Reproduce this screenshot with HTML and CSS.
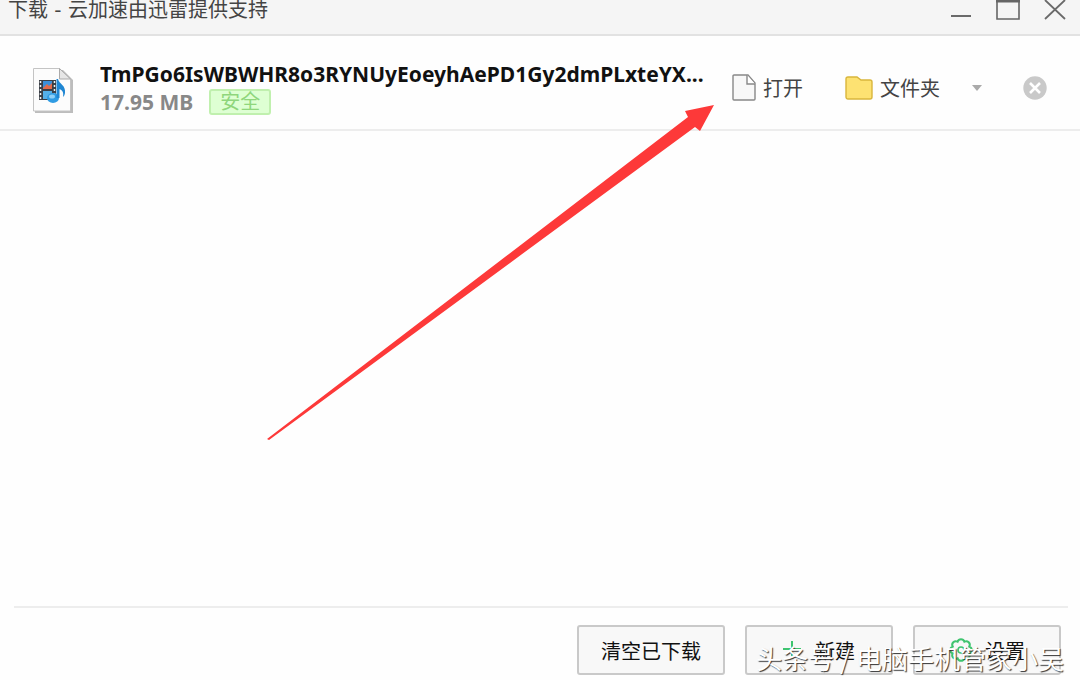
FILE: index.html
```html
<!DOCTYPE html>
<html lang="zh-CN">
<head>
    <meta charset="UTF-8">
    <meta name="viewport" content="width=device-width, initial-scale=1.0">
    <title>下载</title>
    <link rel="stylesheet" href="styles.css">
</head>
<body>
    <header class="title-bar">
        <h1>下载 - 云加速由迅雷提供支持</h1>
        <div class="window-controls">
            <button type="button" aria-label="最小化">
                <svg width="22" height="22" viewBox="0 0 22 22"><path d="M1 16h20" stroke="#6a6a6a" stroke-width="2"/></svg>
            </button>
            <button type="button" aria-label="最大化">
                <svg width="24" height="22" viewBox="0 0 24 22"><path d="M1 1v18h22V1" fill="none" stroke="#666" stroke-width="1.6"/><path d="M0 1h24" stroke="#666" stroke-width="3"/></svg>
            </button>
            <button type="button" aria-label="关闭">
                <svg width="22" height="22" viewBox="0 0 22 22"><path d="M1 0l20 19M21 0L1 19" stroke="#6a6a6a" stroke-width="1.8"/></svg>
            </button>
        </div>
    </header>

    <main>
        <div class="download-item">
            <svg class="file-icon" width="42" height="56" viewBox="0 -6 42 56">
                <path d="M3 4h28l10 10v33H3z" fill="#bdbdbd"/>
                <path d="M1.500 2.500h26l11 11v31.500h-37z" fill="#fcfcfc" stroke="#c4c4c4"/>
                <path d="M27.500 2.500v10.500h11z" fill="#e6e6e6" stroke="#aaa"/>
                <path d="M7 14h17v20H7z" fill="#3a3f46"/>
                <path d="M11 15h9v8h-9z" fill="#3b8fd8"/>
                <path d="M11 22l4-4 2 2 3-3v6h-9z" fill="#e26a4a"/>
                <path d="M11 25h9v8h-9z" fill="#55b0e8"/>
                <path d="M8.500 15v19M22.500 15v19" stroke="#f2f2f2" stroke-width="1.500" stroke-dasharray="2 2"/>
                <ellipse cx="21" cy="32" rx="6" ry="5" fill="#2f9be3"/>
                <path d="M24.500 32V13h1.500c1 5 8 6 7 14-.3 2-1 3-2 4 1-5-1-7-3.500-8v9z" fill="#1f86d2"/>
                <ellipse cx="20" cy="30.500" rx="3" ry="2" fill="#8fd0f7"/>
            </svg>
            <div class="file-info">
                <p class="file-name">TmPGo6IsWBWHR8o3RYNUyEoeyhAePD1Gy2dmPLxteYX...</p>
                <p class="file-meta"><span>17.95 MB</span><span class="safe-tag">安全</span></p>
            </div>
            <div class="item-actions">
                <button type="button" class="open-btn">
                    <svg width="24" height="28" viewBox="0 0 24 28"><path d="M2 1h14l7 8v16a1 1 0 0 1-1 1H2a1 1 0 0 1-1-1V2a1 1 0 0 1 1-1z" fill="#f8f8f8" stroke="#888" stroke-width="1.400"/><path d="M15 1v9h8" fill="#fff" stroke="#888" stroke-width="1.400"/></svg>
                    打开
                </button>
                <button type="button" class="folder-btn">
                    <svg width="28" height="28" viewBox="0 0 28 28"><path d="M3 3h9l4 3h9a2 2 0 0 1 2 2v15a2 2 0 0 1-2 2H3a2 2 0 0 1-2-2V5a2 2 0 0 1 2-2z" fill="#fde272" stroke="#d9b63c" stroke-width="1.400"/></svg>
                    文件夹
                </button>
                <button type="button" class="more-btn" aria-label="更多">
                    <svg width="10" height="8" viewBox="0 0 10 8"><path d="M0 1h10L5 7z" fill="#aaa"/></svg>
                </button>
                <button type="button" class="remove-btn" aria-label="删除">
                    <svg width="24" height="24" viewBox="0 0 24 24"><circle cx="12" cy="12" r="11.700" fill="#c9c9c9"/><path d="M7 7l10 10M17 7L7 17" stroke="#fff" stroke-width="2.600"/></svg>
                </button>
            </div>
        </div>
    </main>

    <footer class="bottom-bar">
        <button type="button">清空已下载</button>
        <button type="button">
            <svg width="20" height="24" viewBox="0 0 20 24"><path d="M9 3v16M0 11h18" stroke="#3fc46f" stroke-width="2"/></svg>
            新建
        </button>
        <button type="button">
            <svg width="24" height="26" viewBox="0 0 24 26"><path d="M20.300 9.600A3.600 3.600 0 0 0 15.400 4.700A3.600 3.600 0 0 0 8.600 4.700A3.600 3.600 0 0 0 3.700 9.600A3.600 3.600 0 0 0 3.700 16.400A3.600 3.600 0 0 0 8.600 21.300A3.600 3.600 0 0 0 15.400 21.300A3.600 3.600 0 0 0 20.300 16.400A3.600 3.600 0 0 0 20.300 9.600z" fill="none" stroke="#3fc46f" stroke-width="2"/><circle cx="12" cy="13" r="3" fill="none" stroke="#3fc46f" stroke-width="1.600"/></svg>
            设置
        </button>
    </footer>

    <!-- Pointer to the open button -->
    <svg class="arrow" width="450" height="340" viewBox="0 0 450 340"><path d="M0 334L421 12l-3-6L447 0l-14 26-5-4L2 335z" fill="#fd3939"/></svg>
    <div class="watermark">头条号 / 电脑手机管家小吴</div>
</body>
</html>
```
FILE: styles.css
```css
:root {
    --bar-color: #f5f5f5;
    --line-color: #ededed;
    --text-color: #444;
    --safe-color: #8fd67c;
}

* {
    margin: 0;
    padding: 0;
    box-sizing: border-box;
}

body {
    position: relative;
    display: flex;
    flex-direction: column;
    min-height: 100vh;
    background-color: #fefefe;
    color: var(--text-color);
    font-family: 'DejaVu Sans', 'Noto Sans CJK SC', sans-serif;
    font-size: 20px;
    overflow: hidden;
}

button {
    display: flex;
    align-items: center;
    border: none;
    background: none;
    color: inherit;
    font: inherit;
    white-space: nowrap;
    cursor: pointer;
}

svg {
    display: block;
    flex-shrink: 0;
}

.title-bar {
    display: flex;
    justify-content: space-between;
    align-items: flex-start;
    height: 36px;
    padding: 0 14px 0 8px;
    background-color: var(--bar-color);
    border-bottom: 2px solid #e2e2e2;
}

h1 {
    font-size: 20px;
    font-weight: normal;
    line-height: 20px;
}

.window-controls {
    display: flex;
    gap: 24px;
}

.download-item {
    display: flex;
    align-items: center;
    height: 95px;
    padding: 10px 33px 0 32px;
    border-bottom: 2px solid var(--line-color);
}

.file-info {
    flex: 1;
    min-width: 0;
    margin-left: 26px;
    font-family: 'Noto Sans', 'Noto Sans CJK SC', sans-serif;
    font-size: 21px;
    font-weight: bold;
}

.file-name {
    overflow: hidden;
    color: #111;
    line-height: 28px;
    white-space: nowrap;
}

.file-meta {
    display: flex;
    align-items: center;
    gap: 16px;
    color: #888;
    line-height: 28px;
}

.safe-tag {
    padding: 0 9px;
    border: 2px solid #c0f0ae;
    border-radius: 3px;
    background-color: #deffd3;
    color: var(--safe-color);
    font-size: 20px;
    font-weight: normal;
    line-height: 22px;
}

.item-actions {
    display: flex;
    align-items: center;
    margin-left: 20px;
}

.open-btn,
.folder-btn {
    gap: 7px;
}

.folder-btn {
    margin-left: 42px;
}

.more-btn {
    margin-left: 32px;
}

.remove-btn {
    margin-left: 41px;
}

.bottom-bar {
    display: flex;
    justify-content: flex-end;
    gap: 20px;
    margin: auto 12px 0 14px;
    padding: 17px 7px 5px 0;
    border-top: 2px solid var(--line-color);
}

.bottom-bar button {
    justify-content: center;
    gap: 12px;
    width: 148px;
    height: 50px;
    border: 2px solid #c9c9c9;
    border-radius: 3px;
    background-color: #f8f8f8;
    color: #111;
}

.arrow {
    position: absolute;
    top: 105px;
    left: 267px;
    pointer-events: none;
}

.watermark {
    position: absolute;
    right: 16px;
    bottom: 6px;
    color: #fff;
    font-family: 'Noto Sans CJK SC', sans-serif;
    font-size: 26px;
    line-height: 32px;
    text-shadow: 1px 1px 1px #333;
    white-space: nowrap;
    pointer-events: none;
}
```
